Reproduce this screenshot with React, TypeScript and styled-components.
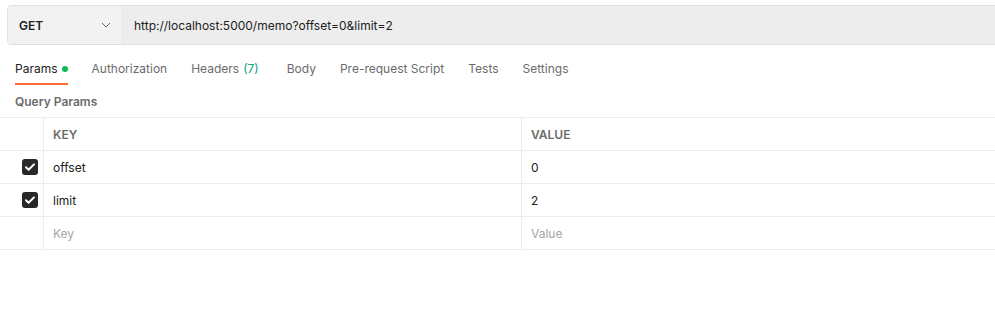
import styled, { createGlobalStyle } from "styled-components";

const GlobalStyle = createGlobalStyle`
  html, body {
    margin: 0;
    padding: 0;
    background: #ffffff;
    font-family: Inter, "Noto Sans", sans-serif;
  }
`;

const tabs = [
  { label: "Params", dot: true },
  { label: "Authorization" },
  { label: "Headers", count: "(7)" },
  { label: "Body" },
  { label: "Pre-request Script" },
  { label: "Tests" },
  { label: "Settings" },
];

const params = [
  { key: "offset", value: "0" },
  { key: "limit", value: "2" },
];

const App = () => {
  return (
    <Page>
      <GlobalStyle />
      <UrlBar>
        <MethodSelect>
          <Method>GET</Method>
          <Chevron viewBox="0 0 10 6" width="10" height="6">
            <path d="M1 1l4 4 4-4" fill="none" stroke="#6b6b6b" strokeWidth="1" />
          </Chevron>
        </MethodSelect>
        <UrlInput>http://localhost:5000/memo?offset=0&amp;limit=2</UrlInput>
      </UrlBar>

      <TabRow>
        {tabs.map((tab, i) => (
          <Tab key={tab.label} $active={i === 0}>
            {tab.label}
            {tab.count && <Count>{tab.count}</Count>}
            {tab.dot && <Dot />}
          </Tab>
        ))}
      </TabRow>

      <SectionTitle>Query Params</SectionTitle>

      <Table>
        <Row>
          <CheckCell />
          <KeyCell>
            <HeadText>KEY</HeadText>
          </KeyCell>
          <ValueCell>
            <HeadText>VALUE</HeadText>
          </ValueCell>
        </Row>
        {params.map((p) => (
          <Row key={p.key}>
            <CheckCell>
              <Checkbox>
                <svg viewBox="0 0 16 16" width="16" height="16">
                  <path
                    d="M4 8.3l2.6 2.5L12 5.4"
                    fill="none"
                    stroke="#ffffff"
                    strokeWidth="2"
                    strokeLinecap="round"
                    strokeLinejoin="round"
                  />
                </svg>
              </Checkbox>
            </CheckCell>
            <KeyCell>
              <CellText>{p.key}</CellText>
            </KeyCell>
            <ValueCell>
              <CellText>{p.value}</CellText>
            </ValueCell>
          </Row>
        ))}
        <Row>
          <CheckCell />
          <KeyCell>
            <CellText $placeholder>Key</CellText>
          </KeyCell>
          <ValueCell>
            <CellText $placeholder>Value</CellText>
          </ValueCell>
        </Row>
      </Table>
    </Page>
  );
};

export default App;

const Page = styled.div`
  width: 995px;
  height: 334px;
  overflow: hidden;
  background: #ffffff;
  padding-top: 5px;
  box-sizing: border-box;
`;

const UrlBar = styled.div`
  display: flex;
  height: 40px;
  margin-left: 7px;
  margin-right: -6px;
  box-sizing: border-box;
  border: 1px solid #e0e0e0;
  border-radius: 4px;
  overflow: hidden;
`;

const MethodSelect = styled.div`
  width: 115px;
  display: flex;
  align-items: center;
  justify-content: space-between;
  padding: 0 11px 0 11px;
  box-sizing: border-box;
  background: #f2f2f2;
  border-right: 1px solid #e6e6e6;
`;

const Method = styled.span`
  font-size: 12px;
  font-weight: 600;
  color: #212121;
`;

const Chevron = styled.svg`
  display: block;
`;

const UrlInput = styled.div`
  flex: 1;
  display: flex;
  align-items: center;
  padding-left: 11px;
  background: #ededed;
  font-size: 12px;
  color: #212121;
`;

const TabRow = styled.div`
  display: flex;
  gap: 24px;
  padding: 0 15px;
  margin-top: 6px;
  height: 34px;
`;

const Tab = styled.div<{ $active?: boolean }>`
  display: flex;
  align-items: center;
  font-size: 12px;
  color: ${(p) => (p.$active ? "#212121" : "#6b6b6b")};
  box-sizing: border-box;
  border-bottom: 2px solid ${(p) => (p.$active ? "#ff6c37" : "transparent")};
  padding-top: 2px;
`;

const Count = styled.span`
  margin-left: 4px;
  margin-right: 4px;
  color: #0e9f86;
`;

const Dot = styled.span`
  width: 6px;
  height: 6px;
  border-radius: 50%;
  background: #0cbb52;
  margin-left: 4px;
  margin-top: 1px;
`;

const SectionTitle = styled.div`
  padding: 9px 15px 0;
  height: 24px;
  font-size: 12px;
  font-weight: 600;
  color: #6b6b6b;
  box-sizing: border-box;
`;

const Table = styled.div`
  margin-top: 8px;
  border-top: 1px solid #ededed;
`;

const Row = styled.div`
  display: grid;
  grid-template-columns: 44px 478px 1fr;
  height: 33px;
  border-bottom: 1px solid #ededed;
  box-sizing: border-box;
`;

const CheckCell = styled.div`
  display: flex;
  align-items: center;
  justify-content: flex-end;
  padding-right: 5px;
  border-right: 1px solid #ededed;
`;

const KeyCell = styled.div`
  display: flex;
  align-items: center;
  padding-left: 9px;
  border-right: 1px solid #ededed;
`;

const ValueCell = styled.div`
  display: flex;
  align-items: center;
  padding-left: 9px;
`;

const HeadText = styled.span`
  font-size: 12px;
  font-weight: 600;
  color: #6b6b6b;
`;

const CellText = styled.span<{ $placeholder?: boolean }>`
  font-size: 12px;
  color: ${(p) => (p.$placeholder ? "#a6a6a6" : "#212121")};
`;

const Checkbox = styled.div`
  width: 16px;
  height: 16px;
  border-radius: 3px;
  background: #282828;
  display: flex;
  align-items: center;
  justify-content: center;
`;
